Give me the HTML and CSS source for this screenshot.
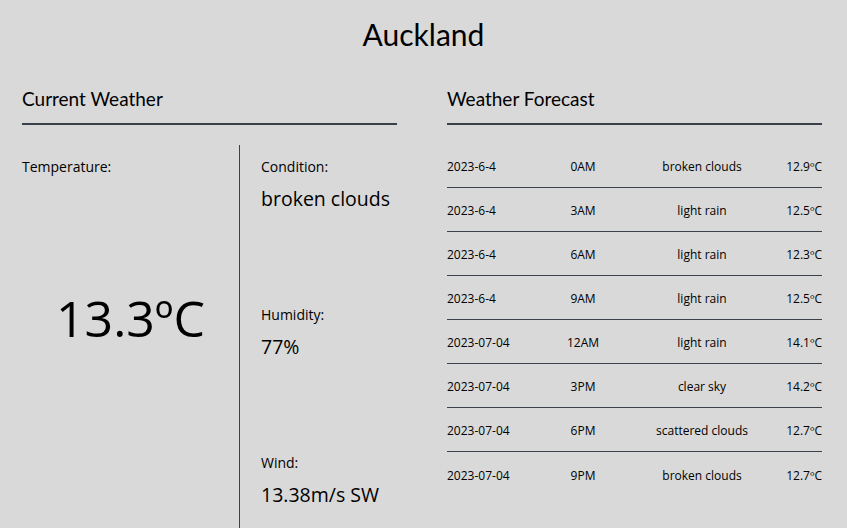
FILE: index.html
```html
<!DOCTYPE html>
<html>
<head>
<meta charset="utf-8">
<link rel="stylesheet" href="styles.css">
</head>
<body>
<h1 class="city">Auckland</h1>
<main class="columns">
  <section class="panel">
    <h2 class="panel-title">Current Weather</h2>
    <div class="current">
      <div class="temp-col">
        <div class="label">Temperature:</div>
        <div class="big-temp">13.3ºC</div>
      </div>
      <div class="details">
        <div class="detail">
          <div class="label">Condition:</div>
          <div class="value">broken clouds</div>
        </div>
        <div class="detail">
          <div class="label">Humidity:</div>
          <div class="value">77%</div>
        </div>
        <div class="detail">
          <div class="label">Wind:</div>
          <div class="value">13.38m/s SW</div>
        </div>
      </div>
    </div>
  </section>
  <section class="panel">
    <h2 class="panel-title">Weather Forecast</h2>
    <div class="forecast">
      <div class="row"><span class="date">2023-6-4</span><span class="time">0AM</span><span class="cond">broken clouds</span><span class="t">12.9ºC</span></div>
      <div class="row"><span class="date">2023-6-4</span><span class="time">3AM</span><span class="cond">light rain</span><span class="t">12.5ºC</span></div>
      <div class="row"><span class="date">2023-6-4</span><span class="time">6AM</span><span class="cond">light rain</span><span class="t">12.3ºC</span></div>
      <div class="row"><span class="date">2023-6-4</span><span class="time">9AM</span><span class="cond">light rain</span><span class="t">12.5ºC</span></div>
      <div class="row"><span class="date">2023-07-04</span><span class="time">12AM</span><span class="cond">light rain</span><span class="t">14.1ºC</span></div>
      <div class="row"><span class="date">2023-07-04</span><span class="time">3PM</span><span class="cond">clear sky</span><span class="t">14.2ºC</span></div>
      <div class="row"><span class="date">2023-07-04</span><span class="time">6PM</span><span class="cond">scattered clouds</span><span class="t">12.7ºC</span></div>
      <div class="row"><span class="date">2023-07-04</span><span class="time">9PM</span><span class="cond">broken clouds</span><span class="t">12.7ºC</span></div>
    </div>
  </section>
</main>
</body>
</html>
```
FILE: styles.css
```css
html, body {
  margin: 0;
  padding: 0;
  background: #d9d9d9;
  color: #000;
  font-family: "Open Sans", "Noto Sans", sans-serif;
  height: 528px;
  overflow: hidden;
}
.city {
  margin: 0;
  height: 70px;
  line-height: 68px;
  text-align: center;
  font-family: Lato, "Open Sans", sans-serif;
  font-weight: 400;
  font-size: 30px;
}
.columns {
  display: flex;
  gap: 50px;
  padding: 0 25px 0 22px;
  height: 458px;
  overflow: hidden;
}
.panel {
  width: 375px;
  flex: none;
}
.panel-title {
  margin: 0;
  height: 55px;
  box-sizing: border-box;
  padding-top: 18px;
  line-height: 22px;
  font-family: Lato, "Open Sans", sans-serif;
  font-weight: 400;
  font-size: 19px;
  border-bottom: 2px solid #3b4148;
}
.current {
  display: grid;
  grid-template-columns: 218px 1fr;
  margin-top: 20px;
  height: 383px;
}
.temp-col {
  border-right: 1px solid #3b4148;
  padding-top: 12px;
}
.label {
  font-size: 14px;
  line-height: 20px;
}
.big-temp {
  margin-top: 111px;
  line-height: 60px;
  font-size: 50px;
  text-align: center;
}
.details {
  padding-left: 21px;
}
.detail {
  height: 148px;
  box-sizing: border-box;
  padding-top: 12px;
}
.value {
  margin-top: 8px;
  line-height: 28px;
  font-size: 19.5px;
}
.forecast {
  margin-top: 19px;
}
.row {
  display: grid;
  grid-template-columns: 100px 72px 166px 37px;
  align-items: center;
  height: 44px;
  padding-top: 2px;
  box-sizing: border-box;
  border-bottom: 1px solid #3b4148;
  font-size: 12px;
  white-space: nowrap;
}
.row:last-child {
  border-bottom: none;
}
.time, .cond {
  text-align: center;
}
.t {
  text-align: right;
  direction: rtl;
}
```
